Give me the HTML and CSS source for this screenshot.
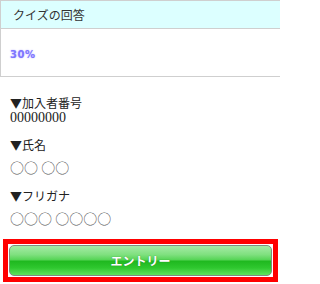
FILE: index.html
```html
<!DOCTYPE html>
<html lang="ja">
<head>
<meta charset="utf-8">
<title>エントリー</title>
<link rel="stylesheet" href="styles.css">
</head>
<body>
<section class="quiz">
  <div class="quiz-head">クイズの回答</div>
  <div class="quiz-body"><span class="answer">30%</span></div>
</section>
<dl class="info">
  <div class="group">
    <dt class="label">▼加入者番号</dt>
    <dd class="value num">00000000</dd>
  </div>
  <div class="group">
    <dt class="label">▼氏名</dt>
    <dd class="value">○○&nbsp;○○</dd>
  </div>
  <div class="group">
    <dt class="label">▼フリガナ</dt>
    <dd class="value">○○○&nbsp;○○○○</dd>
  </div>
</dl>
<div class="entry-frame">
  <button class="entry-btn" type="button">エントリー</button>
</div>
</body>
</html>
```

FILE: styles.css
```css
html, body {
  margin: 0;
  padding: 0;
  background: #fff;
}
body {
  width: 280px;
  height: 284px;
  overflow: hidden;
  font-family: "Noto Sans CJK JP", sans-serif;
  color: #222;
}
.quiz {
  border: 1px solid #cfcfcf;
  border-right: none;
}
.quiz-head {
  height: 27px;
  line-height: 27px;
  padding-left: 12px;
  background: #dcffff;
  border-bottom: 1px solid #cfcfcf;
  font-size: 12px;
  color: #333;
}
.quiz-body {
  height: 47px;
  padding: 10px 9px 0;
  box-sizing: border-box;
}
.answer {
  font-family: "DejaVu Sans", sans-serif;
  font-size: 10px;
  font-weight: bold;
  line-height: 12px;
  letter-spacing: 0.5px;
  color: #7f76ff;
  text-shadow: 0 0 1.5px #a9a2ff;
}
.info {
  margin: 18px 0 0;
  padding: 0 0 0 10px;
  display: flex;
  flex-direction: column;
  gap: 11px;
}
.group {
  display: flex;
  flex-direction: column;
}
.label {
  font-size: 12px;
  line-height: 16px;
  color: #222;
}
.value {
  margin: 4px 0 0;
  font-size: 14px;
  line-height: 20px;
  color: #555;
}
.value.num {
  margin-top: -1px;
  line-height: 16px;
  font-family: "Liberation Serif", serif;
  color: #222;
}
.entry-frame {
  margin: 11px 2px 0 3px;
  border: 5px solid #ff0000;
  padding: 1px;
  background: #fff;
}
.entry-btn {
  display: block;
  width: 100%;
  height: 31px;
  border: 1px solid #7f8c7f;
  border-radius: 5px;
  background: linear-gradient(to bottom, #a6eba6 0%, #7fe07f 30%, #55d455 48%, #1fb81f 52%, #2ec72e 75%, #5ee25e 100%);
  color: #fff;
  font-family: "Noto Sans CJK JP", sans-serif;
  font-size: 12px;
  font-weight: bold;
  text-shadow: 0 0 1px #2a7a2a;
  padding: 0;
  cursor: pointer;
}
```
